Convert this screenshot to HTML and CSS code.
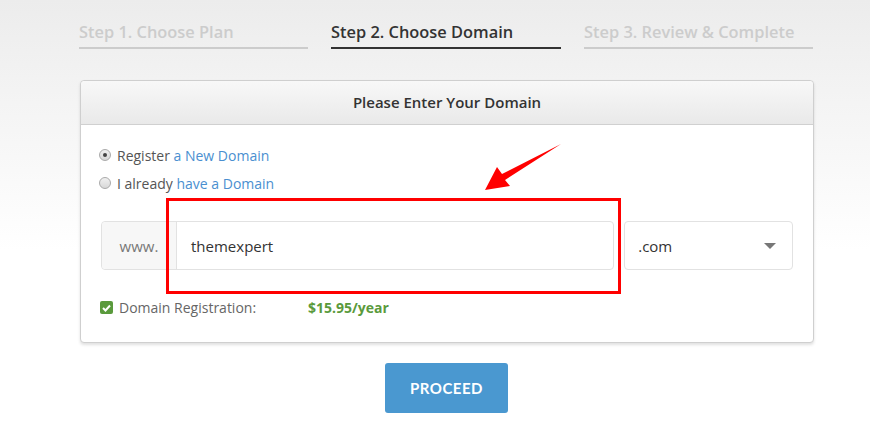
FILE: index.html
```html
<!DOCTYPE html>
<html lang="en">
<head>
    <meta charset="UTF-8">
    <meta name="viewport" content="width=device-width, initial-scale=1.0">
    <title>Choose Domain</title>
    <link rel="stylesheet" href="styles.css">
</head>
<body>

<div class="wrap">
    <div class="steps">
        <div class="step">Step 1. Choose Plan</div>
        <div class="step active">Step 2. Choose Domain</div>
        <div class="step">Step 3. Review &amp; Complete</div>
    </div>

    <div class="panel">
        <div class="panel-head">Please Enter Your Domain</div>
        <div class="panel-body">
            <label class="radio-row"><span class="radio checked"></span>Register <a href="#">a New Domain</a></label>
            <label class="radio-row"><span class="radio"></span>I already <a href="#">have a Domain</a></label>

            <div class="domain-row">
                <div class="input-group">
                    <span class="addon">www.</span>
                    <span class="domain-input">themexpert</span>
                </div>
                <div class="tld-select">
                    <span>.com</span>
                    <span class="caret"></span>
                </div>
                <div class="highlight"></div>
                <svg class="arrow" width="90" height="60" viewBox="0 0 90 60">
                    <path d="M80 4 L24 40 L29 46 L4 50 L16 27 L21 34 Z" fill="#ff0000"/>
                </svg>
            </div>

            <div class="price-row">
                <span class="check">
                    <svg width="9" height="8" viewBox="0 0 9 8"><path d="M1 4 L3.5 6.5 L8 1.5" stroke="#fff" stroke-width="2" fill="none"/></svg>
                </span>
                <span class="price-label">Domain Registration:</span>
                <span class="price">$15.95/year</span>
            </div>
        </div>
    </div>

    <div class="actions">
        <button class="proceed">PROCEED</button>
    </div>
</div>

</body>
</html>
```

FILE: styles.css
```css
body {
    margin: 0;
    padding: 0;
    font-family: "Open Sans", Arial, sans-serif;
    color: #555;
    background: linear-gradient(#ececec 0, #f3f3f3 90px, #f9f9f9 170px, #ffffff 250px);
    min-height: 441px;
}

.wrap {
    width: 735px;
    margin-left: 79px;
    padding-top: 20px;
}

.steps {
    display: grid;
    grid-template-columns: 229px 230px 229px;
    column-gap: 23px;
}

.step {
    font-size: 16.4px;
    font-weight: 600;
    color: #cccccc;
    padding-bottom: 4px;
    border-bottom: 2px solid #cccccc;
    height: 23px;
    line-height: 23px;
}

.step.active {
    color: #333;
    border-bottom-color: #333;
}

.panel {
    margin-top: 31px;
    margin-left: 1px;
    width: 732px;
    background: #fff;
    border: 1px solid #cfcfcf;
    border-radius: 4px;
    box-shadow: 0 2px 3px rgba(0, 0, 0, 0.12);
}

.panel-head {
    height: 43px;
    line-height: 43px;
    text-align: center;
    font-size: 15px;
    font-weight: 600;
    color: #333;
    background: linear-gradient(#f8f8f8, #e9e9e9);
    border-bottom: 1px solid #d0d0d0;
    border-radius: 4px 4px 0 0;
}

.panel-body {
    padding: 16px 20px 25px 18px;
}

.radio-row {
    display: flex;
    align-items: center;
    font-size: 14px;
    height: 28px;
    white-space: pre;
}

.radio-row a {
    color: #4a8fd0;
    text-decoration: none;
}

.radio {
    width: 10px;
    height: 10px;
    border: 1px solid #aaa;
    border-radius: 50%;
    background: linear-gradient(#f0f0f0, #d8d8d8);
    margin-right: 6px;
    position: relative;
}

.radio.checked::after {
    content: "";
    position: absolute;
    left: 3px;
    top: 3px;
    width: 4px;
    height: 4px;
    border-radius: 50%;
    background: #444;
}

.domain-row {
    position: relative;
    display: flex;
    gap: 10px;
    margin-top: 24px;
    margin-left: 2px;
}

.input-group {
    display: flex;
    width: 514px;
    height: 49px;
    border: 1px solid #e2e2e2;
    border-radius: 4px;
    box-sizing: border-box;
}

.addon {
    width: 74px;
    background: #f7f7f7;
    border-right: 1px solid #e2e2e2;
    border-radius: 4px 0 0 4px;
    color: #777;
    font-size: 15px;
    display: flex;
    align-items: center;
    justify-content: center;
}

.domain-input {
    flex: 1;
    display: flex;
    align-items: center;
    padding-left: 14px;
    font-size: 15px;
    color: #333;
}

.tld-select {
    width: 169px;
    height: 49px;
    box-sizing: border-box;
    border: 1px solid #e2e2e2;
    border-radius: 4px;
    display: flex;
    align-items: center;
    justify-content: space-between;
    padding: 0 16px 0 13px;
    font-size: 15px;
    color: #333;
}

.caret {
    width: 0;
    height: 0;
    border-left: 6px solid transparent;
    border-right: 6px solid transparent;
    border-top: 6px solid #777;
}

.highlight {
    position: absolute;
    left: 65px;
    top: -23px;
    width: 449px;
    height: 90px;
    border: 3px solid #ff0000;
}

.arrow {
    position: absolute;
    left: 380px;
    top: -81px;
}

.price-row {
    display: flex;
    align-items: center;
    margin-top: 28px;
    font-size: 14px;
}

.check {
    width: 13px;
    height: 13px;
    border-radius: 2px;
    background: #5a9a3c;
    display: flex;
    align-items: center;
    justify-content: center;
    margin-left: 1px;
    margin-right: 6px;
}

.price-label {
    width: 189px;
    color: #666;
}

.price {
    color: #5a9a3c;
    font-weight: 700;
}

.actions {
    display: flex;
    justify-content: center;
    margin-top: 20px;
}

.proceed {
    width: 123px;
    height: 50px;
    background: #4a98d0;
    color: #fff;
    border: none;
    border-radius: 3px;
    font-family: Lato, "Open Sans", Arial, sans-serif;
    font-weight: 700;
    font-size: 15px;
    letter-spacing: 0.5px;
    cursor: pointer;
}
```
